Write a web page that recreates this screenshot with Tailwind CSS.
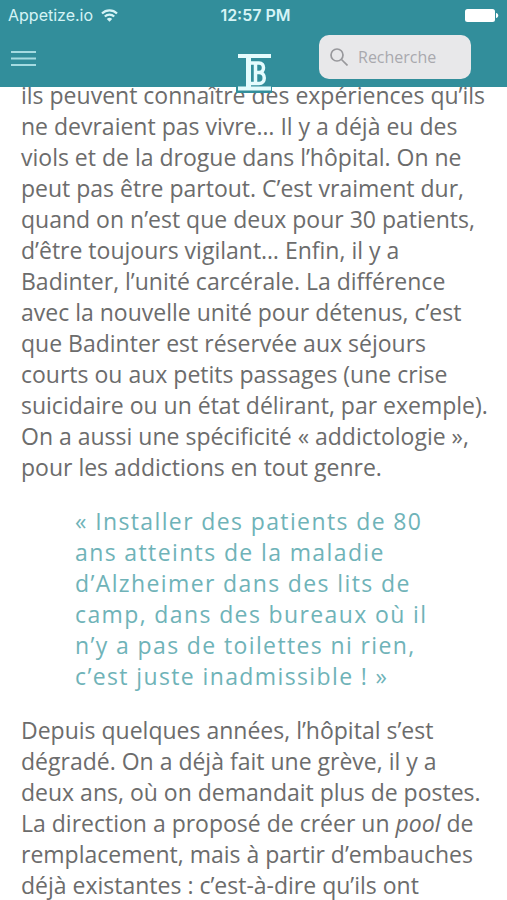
<!DOCTYPE html>
<html lang="fr">
<head>
  <meta charset="UTF-8" />
  <meta name="viewport" content="width=device-width, initial-scale=1" />
  <title>Témoignage</title>
  <script src="https://cdn.jsdelivr.net/npm/@tailwindcss/browser@4"></script>
</head>
<body class="h-screen overflow-hidden bg-white font-['Open_Sans',sans-serif] text-[#6c6c6c]">

<header class="relative z-10 bg-[#328e9b]">
  <div class="grid grid-cols-3 items-center h-[30px] px-2 font-['Inter',sans-serif] text-base text-[#d5f4f6]">
    <div class="flex items-center gap-2">
      <span>Appetize.io</span>
      <svg class="w-[17px] h-[13px]" viewBox="0 0 17 13" fill="none" stroke="currentColor" stroke-width="2.2">
        <path d="M1 4.5a10.6 10.6 0 0 1 15 0" />
        <path d="M3.8 7.5a6.6 6.6 0 0 1 9.4 0" />
        <path d="M8.5 12.8L5.8 10a3.8 3.8 0 0 1 5.4 0z" fill="currentColor" stroke="none" />
      </svg>
    </div>
    <span class="pl-1 text-center font-semibold whitespace-nowrap">12:57 PM</span>
    <svg class="justify-self-end w-[34px] h-[13px]" viewBox="0 0 34 13" fill="#fff">
      <rect width="30" height="13" rx="2.5" />
      <path d="M31 4c3 .5 3 4.5 0 5z" />
    </svg>
  </div>

  <nav class="grid grid-cols-3 h-[57px]">
    <button type="button" aria-label="Menu" class="self-start justify-self-start mt-5 ml-[11px]">
      <svg class="w-[25px] h-[17px]" viewBox="0 0 25 17" stroke="#a5dbe1" stroke-width="2">
        <path d="M0 2h25M0 8.5h25M0 15h25" />
      </svg>
    </button>
    <a href="#" aria-label="Accueil" class="justify-self-center self-start mt-[22px]">
      <svg class="w-[38px] h-[42px]" viewBox="0 0 38 42" fill="none" stroke="#e4fbfd">
        <path d="M1 33h36v8H1z" fill="#328e9b" stroke="none" />
        <path d="M3 4h33M3 36.5h33" stroke-width="4" />
        <path d="M13.5 4v32" stroke-width="5" />
        <path d="M16 11h8c6 0 6 9.500 0 9.500h-3M24 20.500c7 0 7 11 0 11h-8M20.500 11v20" stroke-width="3.5" />
      </svg>
    </a>
    <label class="flex items-center gap-2.5 self-start justify-self-end w-[152px] h-11 mt-[5px] mr-9 px-[11px] rounded-[10px] bg-[#e8e8ea]">
      <svg class="shrink-0 w-[18px] h-[18px]" viewBox="0 0 18 18" fill="none" stroke="#98989c" stroke-width="1.7">
        <circle cx="7" cy="7" r="6" />
        <path d="M11.5 11.5l6 6" />
      </svg>
      <input type="search" placeholder="Recherche" aria-label="Recherche" class="w-full min-w-0 text-base outline-none placeholder:text-[#a9a9ae]" />
    </label>
  </nav>
</header>

<main class="-mt-[7px] pl-[21px] pr-[18px] text-[23px] leading-[31px]">
  <p>ils peuvent connaître des expériences qu’ils ne devraient pas vivre… Il y a déjà eu des viols et de la drogue dans l’hôpital. On ne peut pas être partout. C’est vraiment dur, quand on n’est que deux pour 30 patients, d’être toujours vigilant… Enfin, il y a Badinter, l’unité carcérale. La différence avec la nouvelle unité pour détenus, c’est que Badinter est réservée aux séjours courts ou aux petits passages (une crise suicidaire ou un état délirant, par exemple). On a aussi une spécificité «&nbsp;addictologie&nbsp;», pour les addictions en tout genre.</p>

  <blockquote class="my-[23px] px-[54px] tracking-[0.06em] text-[#6fb3b8]">«&nbsp;Installer des patients de 80 ans atteints de la maladie d’Alzheimer dans des lits de camp, dans des bureaux où il n’y a pas de toilettes ni rien, c’est juste inadmissible&nbsp;!&nbsp;»</blockquote>

  <p>Depuis quelques années, l’hôpital s’est dégradé. On a déjà fait une grève, il y a deux ans, où on demandait plus de postes. La direction a proposé de créer un <em>pool</em> de remplacement, mais à partir d’embauches déjà existantes&nbsp;: c’est-à-dire qu’ils ont</p>
</main>

</body>
</html>
